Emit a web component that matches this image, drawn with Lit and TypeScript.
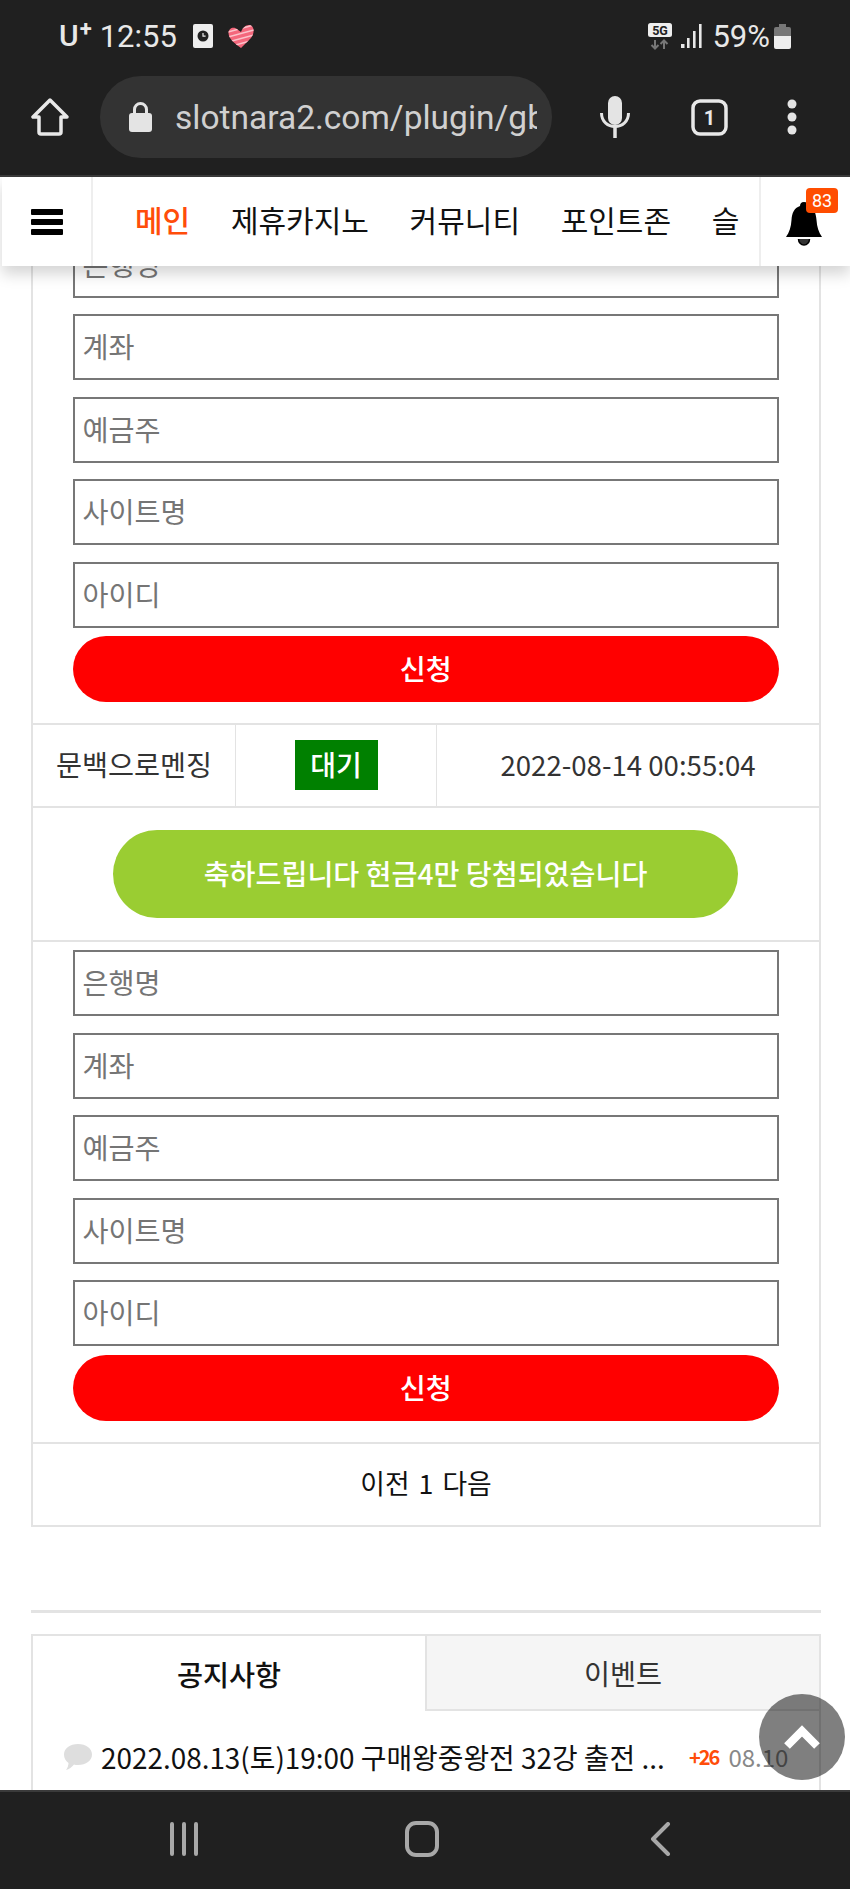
import { LitElement, html, css } from "lit";
import { customElement } from "lit/decorators.js";

@customElement("app-root")
export class AppRoot extends LitElement {
  static styles = css`
    :host { display: block; width: 850px; height: 1889px; }
    * { box-sizing: border-box; }
    .page { position: relative; width: 850px; height: 1889px; overflow: hidden; display: flex; flex-direction: column; background: #fff; font-family: "Noto Sans CJK KR", "Noto Sans", sans-serif; }

    .chrome { height: 177px; flex: none; background: #202020; border-bottom: 2px solid #3a3a3a; display: flex; flex-direction: column; font-family: Roboto, sans-serif; color: #e8e8e8; }
    .status { height: 76px; display: flex; align-items: center; justify-content: space-between; padding: 0 59px 4px 59px; font-size: 31px; }
    .status-l, .status-r { display: flex; align-items: center; }
    .uplus { font-size: 30px; font-weight: 500; display: flex; align-items: flex-start; margin-right: 8px; line-height: 30px; }
    .uplus sup { font-size: 22px; line-height: 16px; font-weight: 700; margin-left: 1px; }
    .card-ic { margin-left: 16px; display: block; }
    .heart { margin-left: 15px; display: block; }
    .sig { margin: 0 10px 0 9px; display: block; }
    .batt { margin-left: 4px; display: block; }
    .toolbar { height: 82px; display: flex; align-items: center; padding-left: 31px; }
    .home { display: block; flex: none; }
    .pill { width: 452px; height: 82px; margin-left: 31px; border-radius: 41px; background: #333; display: flex; align-items: center; padding-left: 29px; flex: none; }
    .url { width: 362px; margin-left: 23px; overflow: hidden; white-space: nowrap; font-size: 33.5px; color: #d0d0d0; }
    .mic { margin-left: 48px; display: block; flex: none; }
    .tabs { margin-left: 61px; display: block; flex: none; }
    .dots { margin-left: 58px; display: block; flex: none; }

    .nav { position: relative; z-index: 2; flex: none; height: 89px; margin-left: 2px; background: #fff; box-shadow: 0 8px 14px rgba(0,0,0,.17); display: flex; align-items: stretch; }
    .burger { width: 91px; flex: none; border-right: 2px solid #eee; display: flex; flex-direction: column; justify-content: center; gap: 4px; padding-left: 29px; }
    .burger i { display: block; width: 32px; height: 6px; border-radius: 1px; background: #000; }
    .menu { width: 666px; flex: none; display: flex; align-items: center; gap: 40.7px; padding: 0 0 6px 42px; white-space: nowrap; font-size: 30px; color: #111; }
    .menu .on { color: #ff4d0a; font-weight: 500; }
    .bell-box { position: relative; flex: 1; border-left: 2px solid #eee; }
    .bell { position: absolute; left: 25px; top: 24px; display: block; }
    .badge { position: absolute; left: 45px; top: 11px; width: 32px; height: 25px; border-radius: 4px; background: #ff4d00; color: #fff; font-size: 18px; line-height: 25px; text-align: center; font-family: Roboto, sans-serif; }

    .view { flex: 1; min-height: 0; overflow: hidden; }
    .scroll { margin-top: -34.5px; padding: 0 29px 0 31px; }
    .board { border: 2px solid #e3e3e3; border-top: 0; }
    .form { padding: 0 40px 21px 39.5px; display: flex; flex-direction: column; gap: 16.5px; }
    .form.next { padding-top: 8px; }
    .input { display: block; width: 706.5px; height: 66px; border: 2px solid #777; padding: 0 8px 3px; font: 400 28.3px "Noto Sans CJK KR", sans-serif; background: #fff; outline: none; }
    .input::placeholder { color: #757575; opacity: 1; }
    .submit { height: 66px; margin-top: -8px; padding-bottom: 3px; border-radius: 33px; background: #f00; color: #fff; font-size: 28.3px; font-weight: 500; display: flex; align-items: center; justify-content: center; }
    .row { display: flex; height: 84.5px; border-top: 2px solid #e3e3e3; border-bottom: 2px solid #e3e3e3; font-size: 28.3px; color: #333; }
    .row > div { display: flex; align-items: center; justify-content: center; }
    .c1 { width: 203px; border-right: 1px solid #e3e3e3; padding-bottom: 3px; }
    .c2 { width: 201px; border-right: 1px solid #e3e3e3; }
    .c3 { flex: 1; font-size: 27.6px; padding-bottom: 3px; }
    .wait { width: 83px; height: 50px; padding-bottom: 3px; background: #008000; color: #fff; font-size: 28px; font-weight: 500; display: flex; align-items: center; justify-content: center; }
    .msg { height: 134.5px; border-bottom: 2px solid #e3e3e3; padding: 22px 0 0 80px; }
    .msg div { width: 625px; height: 88px; padding-bottom: 2px; border-radius: 44px; background: #9acd32; color: #fff; font-size: 28.2px; font-weight: 500; display: flex; align-items: center; justify-content: center; }
    .pager { height: 83px; padding-bottom: 4px; border-top: 2px solid #e3e3e3; display: flex; align-items: center; justify-content: center; gap: 9px; font-size: 26.8px; color: #111; }
    .rule { height: 3px; margin-top: 83px; background: #e3e3e3; }
    .latest { margin-top: 21px; border: 2px solid #e3e3e3; border-bottom: 0; height: 160px; }
    .tabbar { display: flex; height: 75px; }
    .tab { display: flex; align-items: center; justify-content: center; font-size: 28.3px; }
    .tab.a { width: 392px; font-weight: 500; color: #111; }
    .tab.b { flex: 1; background: #f5f5f5; border-left: 2px solid #e3e3e3; border-bottom: 2px solid #e3e3e3; color: #333; }
    .item { display: flex; align-items: center; padding: 19px 0 0 30px; height: 73px; white-space: nowrap; }
    .bubble { display: block; flex: none; }
    .title { margin-left: 8px; width: 564px; font-size: 27.9px; color: #111; overflow: hidden; }
    .plus { margin-left: 24px; font-size: 20px; font-weight: 700; color: #ff4d0a; letter-spacing: -2px; }
    .date { margin-left: 10px; font-size: 24px; color: #888; }

    .bottom { position: relative; z-index: 2; flex: none; height: 99px; background: #202020; border-top: 2px solid #3a3a3a; display: flex; align-items: center; padding: 0 0 3px 169px; }
    .bars { display: block; }
    .square { display: block; margin-left: 206px; }
    .back { display: block; margin-left: 211px; }
    .totop { position: absolute; z-index: 1; left: 759px; top: 1694px; width: 86px; height: 86px; border-radius: 50%; background: rgba(0,0,0,.5); display: flex; align-items: center; justify-content: center; }
  `;

  private form(next: boolean) {
    const names = ["은행명", "계좌", "예금주", "사이트명", "아이디"];
    return html`<div class="form ${next ? "next" : ""}">
      ${names.map((n) => html`<input class="input" placeholder=${n} />`)}
      <div class="submit">신청</div>
    </div>`;
  }

  render() {
    return html`<div class="page">
      <div class="chrome">
        <div class="status">
          <div class="status-l">
            <span class="uplus">U<sup>+</sup></span><span>12:55</span>
            <svg class="card-ic" width="20" height="24" viewBox="0 0 20 24"><rect width="20" height="24" rx="2" fill="#eee"/><circle cx="10" cy="12" r="5.500" fill="#222"/><path d="M10 9v3.200h2.600" stroke="#eee" stroke-width="1.200" fill="none"/></svg>
            <svg class="heart" width="26" height="24" viewBox="0 0 26 24"><defs><clipPath id="hc"><path d="M13 24C8 20 .5 15.500.5 9 .5 4 6 2 9.500 5.500L13 8C15 3 19 0 23 1.500 27 4 26 10 23 14Z"/></clipPath></defs><g clip-path="url(#hc)"><rect width="26" height="24" fill="#f4677c"/><path d="M0 8 26 1M0 13 26 6M0 18 26 11M0 23 26 16" stroke="#fbc3cb" stroke-width="1.600"/></g></svg>
          </div>
          <div class="status-r">
            <svg width="24" height="27" viewBox="0 0 24 27"><rect width="24" height="14" rx="2.500" fill="#eee"/><text x="12" y="11.500" text-anchor="middle" font-family="Roboto" font-weight="700" font-size="12.500" fill="#222">5G</text><path d="M7 17v8M3.500 22 7 25.500 10.500 22M16 26v-8M12.500 21 16 17.500 19.500 21" stroke="#777" stroke-width="2" fill="none"/></svg>
            <svg class="sig" width="21" height="25" viewBox="0 0 21 25"><path d="M0 20h3.500v4H0zM6 14h2.600v10H6zM12 7h2.600v17H12zM18 0h2.600v24H18z" fill="#e8e8e8"/></svg>
            <span>59%</span>
            <svg class="batt" width="17" height="25" viewBox="0 0 17 25"><path d="M5 0h7v3h3a2 2 0 0 1 2 2v8H0V5a2 2 0 0 1 2-2h3z" fill="#777"/><path d="M0 12h17v11a2 2 0 0 1-2 2H2a2 2 0 0 1-2-2z" fill="#eee"/></svg>
          </div>
        </div>
        <div class="toolbar">
          <svg class="home" width="38" height="38" viewBox="0 0 38 38"><path d="M19 2 2 19h6v15a2 2 0 0 0 2 2h18a2 2 0 0 0 2-2V19h6Z" fill="none" stroke="#e8e8e8" stroke-width="3.500" stroke-linejoin="round"/></svg>
          <div class="pill">
            <svg width="23" height="30" viewBox="0 0 23 30"><path d="M5.500 12V7.500a6 6 0 0 1 12 0V12" fill="none" stroke="#e4e4e4" stroke-width="3"/><rect y="11" width="23" height="19" rx="3" fill="#e4e4e4"/></svg>
            <div class="url">slotnara2.com/plugin/gb</div>
          </div>
          <svg class="mic" width="30" height="42" viewBox="0 0 30 42"><rect x="8" y="0" width="14" height="29" rx="7" fill="#e4e4e4"/><path d="M1.500 17c0 18 27 18 27 0" fill="none" stroke="#e4e4e4" stroke-width="3"/><path d="M15 29v13" stroke="#e4e4e4" stroke-width="3.500"/></svg>
          <svg class="tabs" width="37" height="37" viewBox="0 0 37 37"><rect x="2" y="2" width="33" height="33" rx="7" fill="none" stroke="#e8e8e8" stroke-width="3.500"/><text x="18.500" y="25.500" text-anchor="middle" font-family="Roboto" font-weight="700" font-size="20" fill="#e8e8e8">1</text></svg>
          <svg class="dots" width="12" height="38" viewBox="0 0 12 38"><circle cx="6" cy="6" r="4.500" fill="#e4e4e4"/><circle cx="6" cy="19" r="4.500" fill="#e4e4e4"/><circle cx="6" cy="32" r="4.500" fill="#e4e4e4"/></svg>
        </div>
      </div>

      <div class="nav">
        <div class="burger"><i></i><i></i><i></i></div>
        <div class="menu">
          <span class="on">메인</span><span>제휴카지노</span><span>커뮤니티</span><span>포인트존</span><span>슬</span>
        </div>
        <div class="bell-box">
          <svg class="bell" width="36" height="46" viewBox="0 0 36 46"><path d="M18 1c3 0 4 2 4 4 6 2 8 7 8.500 14 .5 7 2 12 5.500 17H0c3.500-5 5-10 5.500-17C6 12 8 7 14 5c0-2 1-4 4-4Z" fill="#000"/><path d="M12.500 38a5.500 6 0 0 0 11 0" fill="#333" stroke="#000" stroke-width="1.500"/></svg>
          <div class="badge">83</div>
        </div>
      </div>

      <div class="view"><div class="scroll">
        <div class="board">
          ${this.form(false)}
          <div class="row">
            <div class="c1">문백으로멘징</div>
            <div class="c2"><span class="wait">대기</span></div>
            <div class="c3">2022-08-14 00:55:04</div>
          </div>
          <div class="msg"><div>축하드립니다 현금4만 당첨되었습니다</div></div>
          ${this.form(true)}
          <div class="pager"><span>이전</span><span>1</span><span>다음</span></div>
        </div>
        <div class="rule"></div>
        <div class="latest">
          <div class="tabbar"><div class="tab a">공지사항</div><div class="tab b">이벤트</div></div>
          <div class="item">
            <svg class="bubble" width="30" height="28" viewBox="0 0 30 28"><path d="M15 1c8 0 14 4.500 14 10.500S23 22 15 22c-1.500 0-3 0-4-.500C9 24 6 26.500 3 27c1.500-2 2.500-4.500 2.500-7C2.500 18 1 15 1 11.500 1 5.500 7 1 15 1Z" fill="#dedede"/></svg>
            <span class="title">2022.08.13(토)19:00 구매왕중왕전 32강 출전 ...</span>
            <span class="plus">+26</span>
            <span class="date">08.10</span>
          </div>
        </div>
      </div></div>

      <div class="bottom">
        <svg class="bars" width="30" height="34" viewBox="0 0 30 34"><path d="M3 2v30M15 2v30M27 2v30" stroke="#a8a8a8" stroke-width="4" stroke-linecap="round"/></svg>
        <svg class="square" width="34" height="36" viewBox="0 0 34 36"><rect x="2" y="2" width="30" height="32" rx="9" fill="none" stroke="#a8a8a8" stroke-width="4"/></svg>
        <svg class="back" width="22" height="34" viewBox="0 0 22 34"><path d="M18 2 3 17l15 15" fill="none" stroke="#a8a8a8" stroke-width="4" stroke-linecap="round" stroke-linejoin="round"/></svg>
      </div>

      <div class="totop">
        <svg width="36" height="24" viewBox="0 0 36 24"><path d="M3 21 18 6l15 15" fill="none" stroke="#fff" stroke-width="8"/></svg>
      </div>
    </div>`;
  }
}
